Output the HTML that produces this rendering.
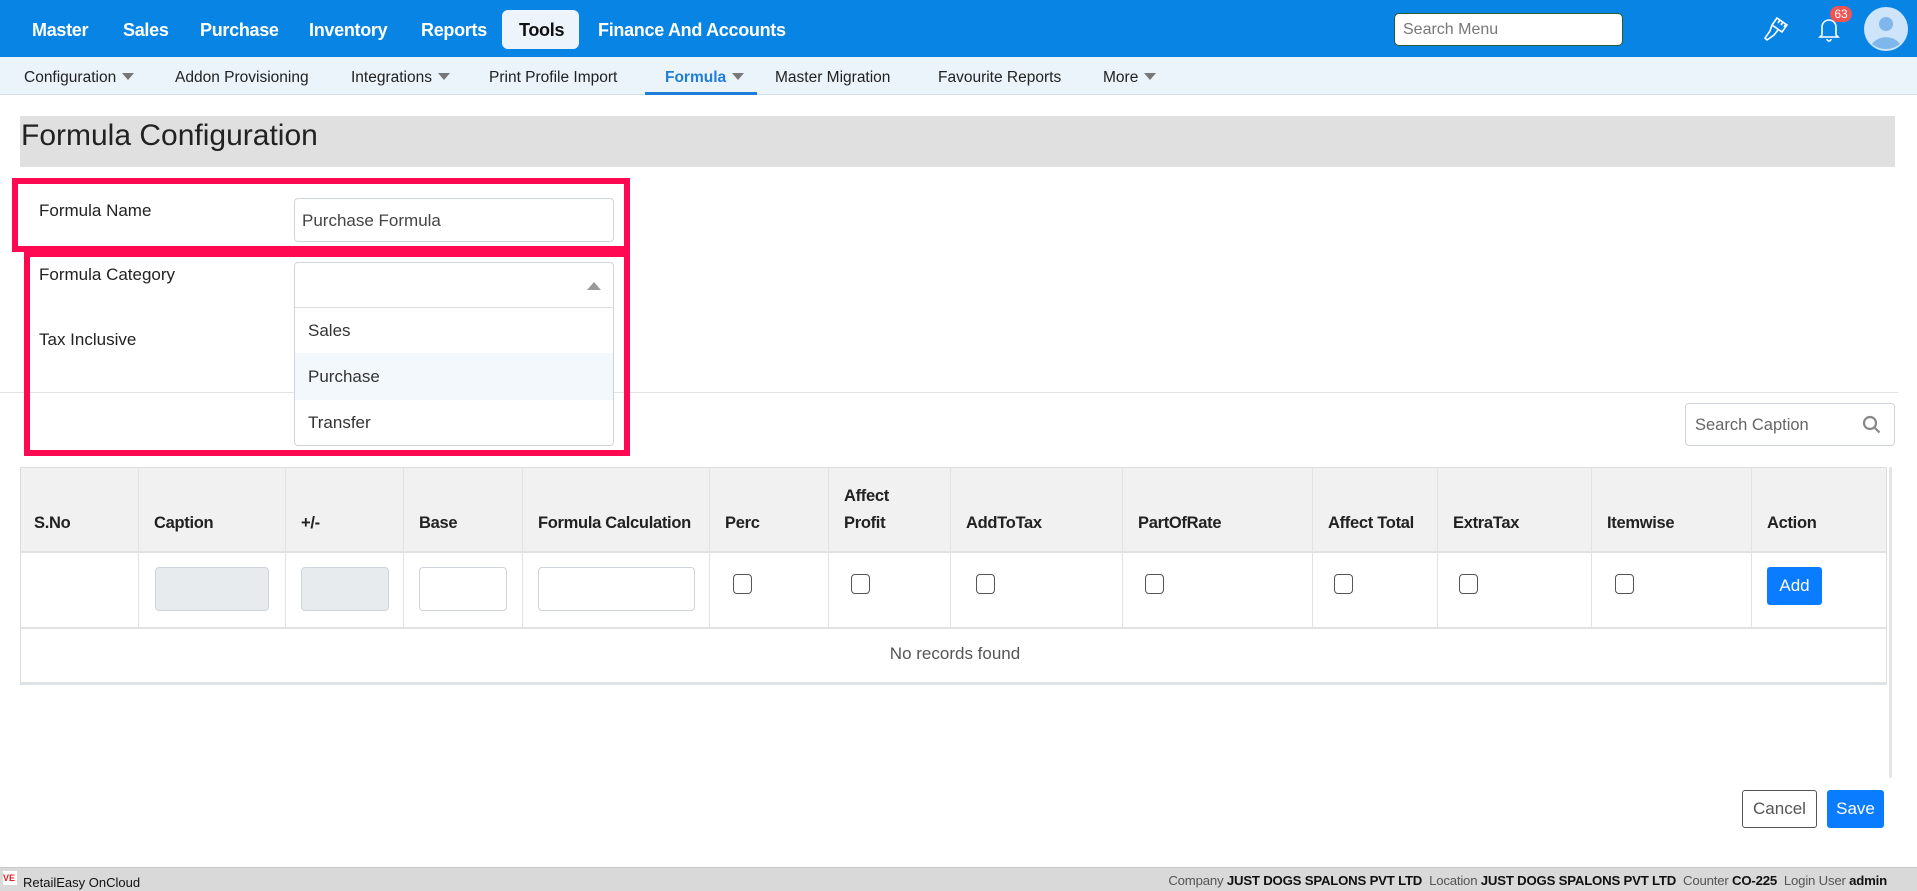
<!DOCTYPE html>
<html><head><meta charset="utf-8"><style>
*{box-sizing:border-box;margin:0;padding:0}
body{width:1917px;height:891px;position:relative;overflow:hidden;background:#fff;font-family:"Liberation Sans",sans-serif;color:#222}
.a{position:absolute}
.top{left:0;top:0;width:1917px;height:57px;background:#0884e4}
.nv{top:20px;color:#fff;font-weight:bold;font-size:18px;letter-spacing:-0.3px}
.sub{left:0;top:57px;width:1917px;height:38px;background:#ebf3fb;border-bottom:1px solid #d5e2ee}
.sn{top:69px;font-size:15.5px;color:#222}
.car{display:inline-block;width:0;height:0;border-left:6px solid transparent;border-right:6px solid transparent;border-top:7px solid #777;margin-left:6px;vertical-align:2px}
.lbl{font-size:17px;color:#222}
.inp{border:1px solid #cfd4da;border-radius:4px;background:#fff}
.th{top:467px;height:84px;font-weight:bold;font-size:16.5px;color:#222;display:flex;align-items:flex-end;padding-bottom:14px;padding-left:14px;letter-spacing:-0.3px;line-height:27px}
.vl{top:467px;width:1px;height:160px;background:#e2e2e2}
.cb{width:19px;height:20px;border:1.5px solid #555;border-radius:4px;top:574px;background:#fff}
</style></head><body>
<div class="a top"></div>
<div class="a nv" style="left:32px">Master</div>
<div class="a nv" style="left:123px">Sales</div>
<div class="a nv" style="left:200px">Purchase</div>
<div class="a nv" style="left:309px">Inventory</div>
<div class="a nv" style="left:421px">Reports</div>
<div class="a" style="left:502px;top:10px;width:77px;height:39px;background:#eef4fb;border-radius:6px"></div>
<div class="a nv" style="left:519px;color:#111">Tools</div>
<div class="a nv" style="left:598px">Finance And Accounts</div>
<div class="a" style="left:1394px;top:13px;width:229px;height:33px;background:#fff;border:1px solid #2a5a30;border-radius:5px;font-size:16px;color:#777;padding:7px 8px">Search Menu</div>
<svg class="a" style="left:1762px;top:14px" width="30" height="30" viewBox="0 0 30 30" fill="none" stroke="#fff" stroke-width="1.6"><path d="M15 4l10 7-5 7-10-7z"/><path d="M18 6l-2 3M21 8l-2 3M24 10l-2 3"/><path d="M10 11l-2 6-5 7 2 2 7-5 4-5"/></svg>
<svg class="a" style="left:1814px;top:14px" width="30" height="30" viewBox="0 0 30 30" fill="none" stroke="#fff" stroke-width="1.6"><path d="M8 21V13a7 7 0 0 1 14 0v8l2 2H6z"/><path d="M13 25a2 2 0 0 0 4 0"/></svg>
<div class="a" style="left:1830px;top:6px;width:22px;height:16px;background:#f05454;border-radius:8px;color:#fff;font-size:12px;text-align:center;line-height:16px">63</div>
<svg class="a" style="left:1864px;top:7px" width="44" height="44" viewBox="0 0 44 44"><circle cx="22" cy="22" r="22" fill="#cde4fa"/><circle cx="22" cy="17" r="7" fill="#7fb6ec"/><path d="M8 37a16 13 0 0 1 28 0 22 22 0 0 1-28 0z" fill="#7fb6ec"/></svg>

<div class="a sub"></div>
<div class="a sn" style="left:24px">Configuration<span class="car"></span></div>
<div class="a sn" style="left:175px">Addon Provisioning</div>
<div class="a sn" style="left:351px">Integrations<span class="car"></span></div>
<div class="a sn" style="left:489px">Print Profile Import</div>
<div class="a sn" style="left:665px;color:#1e7fd9;font-weight:bold">Formula<span class="car"></span></div>
<div class="a" style="left:645px;top:92px;width:112px;height:3px;background:#1e7fd9"></div>
<div class="a sn" style="left:775px">Master Migration</div>
<div class="a sn" style="left:938px">Favourite Reports</div>
<div class="a sn" style="left:1103px">More<span class="car"></span></div>

<div class="a" style="left:20px;top:116px;width:1875px;height:51px;background:#e0e0e0"></div>
<div class="a" style="left:21px;top:119px;font-size:30px;color:#222">Formula Configuration</div>

<div class="a" style="left:0;top:392px;width:1898px;height:1px;background:#e3e3e3"></div>

<div class="a lbl" style="left:39px;top:201px">Formula Name</div>
<div class="a inp" style="left:294px;top:198px;width:320px;height:44px;font-size:17px;color:#444;padding:12px 7px">Purchase Formula</div>
<div class="a lbl" style="left:39px;top:265px">Formula Category</div>
<div class="a lbl" style="left:39px;top:330px">Tax Inclusive</div>
<div class="a inp" style="left:294px;top:262px;width:320px;height:184px;background:#fff"></div>
<div class="a" style="left:295px;top:307px;width:318px;height:1px;background:#dde"></div>
<div class="a" style="left:587px;top:282px;width:0;height:0;border-left:7px solid transparent;border-right:7px solid transparent;border-bottom:8px solid #999"></div>
<div class="a" style="left:295px;top:353px;width:318px;height:47px;background:#f3f8fd"></div>
<div class="a lbl" style="left:308px;top:321px;color:#333">Sales</div>
<div class="a lbl" style="left:308px;top:367px;color:#333">Purchase</div>
<div class="a lbl" style="left:308px;top:413px;color:#333">Transfer</div>

<div class="a" style="left:12px;top:178px;width:618px;height:74px;border:6px solid #ff0a52"></div>
<div class="a" style="left:24px;top:251px;width:606px;height:205px;border:6px solid #ff0a52"></div>

<div class="a inp" style="left:1685px;top:403px;width:210px;height:43px;font-size:16.5px;color:#666;padding:12px 9px">Search Caption</div>
<svg class="a" style="left:1862px;top:415px" width="20" height="20" viewBox="0 0 20 20" fill="none" stroke="#888" stroke-width="2.2"><circle cx="8" cy="8" r="6"/><path d="M12.5 12.5l5 5"/></svg>

<div class="a" style="left:20px;top:467px;width:1867px;height:218px;border:1px solid #ddd;border-bottom:3px solid #dfe3e7"></div>
<div class="a" style="left:21px;top:468px;width:1865px;height:83px;background:#f1f1f1"></div>
<div class="a" style="left:21px;top:551px;width:1865px;height:2px;background:#e2e2e2"></div>
<div class="a" style="left:21px;top:627px;width:1865px;height:2px;background:#e2e2e2"></div>
<div class="a vl" style="left:138px"></div><div class="a vl" style="left:285px"></div><div class="a vl" style="left:403px"></div><div class="a vl" style="left:522px"></div><div class="a vl" style="left:709px"></div><div class="a vl" style="left:828px"></div><div class="a vl" style="left:950px"></div><div class="a vl" style="left:1122px"></div><div class="a vl" style="left:1312px"></div><div class="a vl" style="left:1437px"></div><div class="a vl" style="left:1591px"></div><div class="a vl" style="left:1751px"></div>
<div class="a" style="left:1889px;top:467px;width:3px;height:311px;background:#e4e4e4;border-radius:2px"></div>
<div class="a th" style="left:20px">S.No</div>
<div class="a th" style="left:140px">Caption</div>
<div class="a th" style="left:287px">+/-</div>
<div class="a th" style="left:405px">Base</div>
<div class="a th" style="left:524px">Formula Calculation</div>
<div class="a th" style="left:711px">Perc</div>
<div class="a th" style="left:830px">Affect<br>Profit</div>
<div class="a th" style="left:952px">AddToTax</div>
<div class="a th" style="left:1124px">PartOfRate</div>
<div class="a th" style="left:1314px">Affect Total</div>
<div class="a th" style="left:1439px">ExtraTax</div>
<div class="a th" style="left:1593px">Itemwise</div>
<div class="a th" style="left:1753px">Action</div>
<div class="a inp" style="left:155px;top:567px;width:114px;height:44px;background:#e8ebee"></div>
<div class="a inp" style="left:301px;top:567px;width:88px;height:44px;background:#e8ebee"></div>
<div class="a inp" style="left:419px;top:567px;width:88px;height:44px"></div>
<div class="a inp" style="left:538px;top:567px;width:157px;height:44px"></div>
<div class="a cb" style="left:733px"></div><div class="a cb" style="left:851px"></div><div class="a cb" style="left:976px"></div><div class="a cb" style="left:1145px"></div><div class="a cb" style="left:1334px"></div><div class="a cb" style="left:1459px"></div><div class="a cb" style="left:1615px"></div>
<div class="a" style="left:1767px;top:567px;width:55px;height:38px;background:#0a7cff;border-radius:3px;color:#fff;font-size:17px;text-align:center;line-height:38px">Add</div>
<div class="a" style="left:0;top:644px;width:1910px;text-align:center;font-size:17px;color:#555">No records found</div>

<div class="a" style="left:1742px;top:790px;width:75px;height:38px;border:1px solid #555;border-radius:3px;font-size:17px;color:#555;text-align:center;line-height:36px">Cancel</div>
<div class="a" style="left:1827px;top:790px;width:57px;height:38px;background:#0a7cff;border-radius:3px;color:#fff;font-size:17px;text-align:center;line-height:38px">Save</div>

<div class="a" style="left:0;top:867px;width:1917px;height:24px;background:#d9d9d9;border-top:1px solid #c8c8c8"></div>
<div class="a" style="left:3px;top:871px;width:14px;height:14px;background:#fff;color:#d22;font-size:9px;font-weight:bold;line-height:14px">VE</div>
<div class="a" style="left:23px;top:875px;font-size:13px;color:#111">RetailEasy OnCloud</div>
<div class="a" style="right:30px;top:873px;font-size:13.2px;color:#555;letter-spacing:-0.2px">Company <b style="color:#111">JUST DOGS SPALONS PVT LTD</b>&nbsp; Location <b style="color:#111">JUST DOGS SPALONS PVT LTD</b>&nbsp; Counter <b style="color:#111">CO-225</b>&nbsp; Login User <b style="color:#111">admin</b></div>
</body></html>
